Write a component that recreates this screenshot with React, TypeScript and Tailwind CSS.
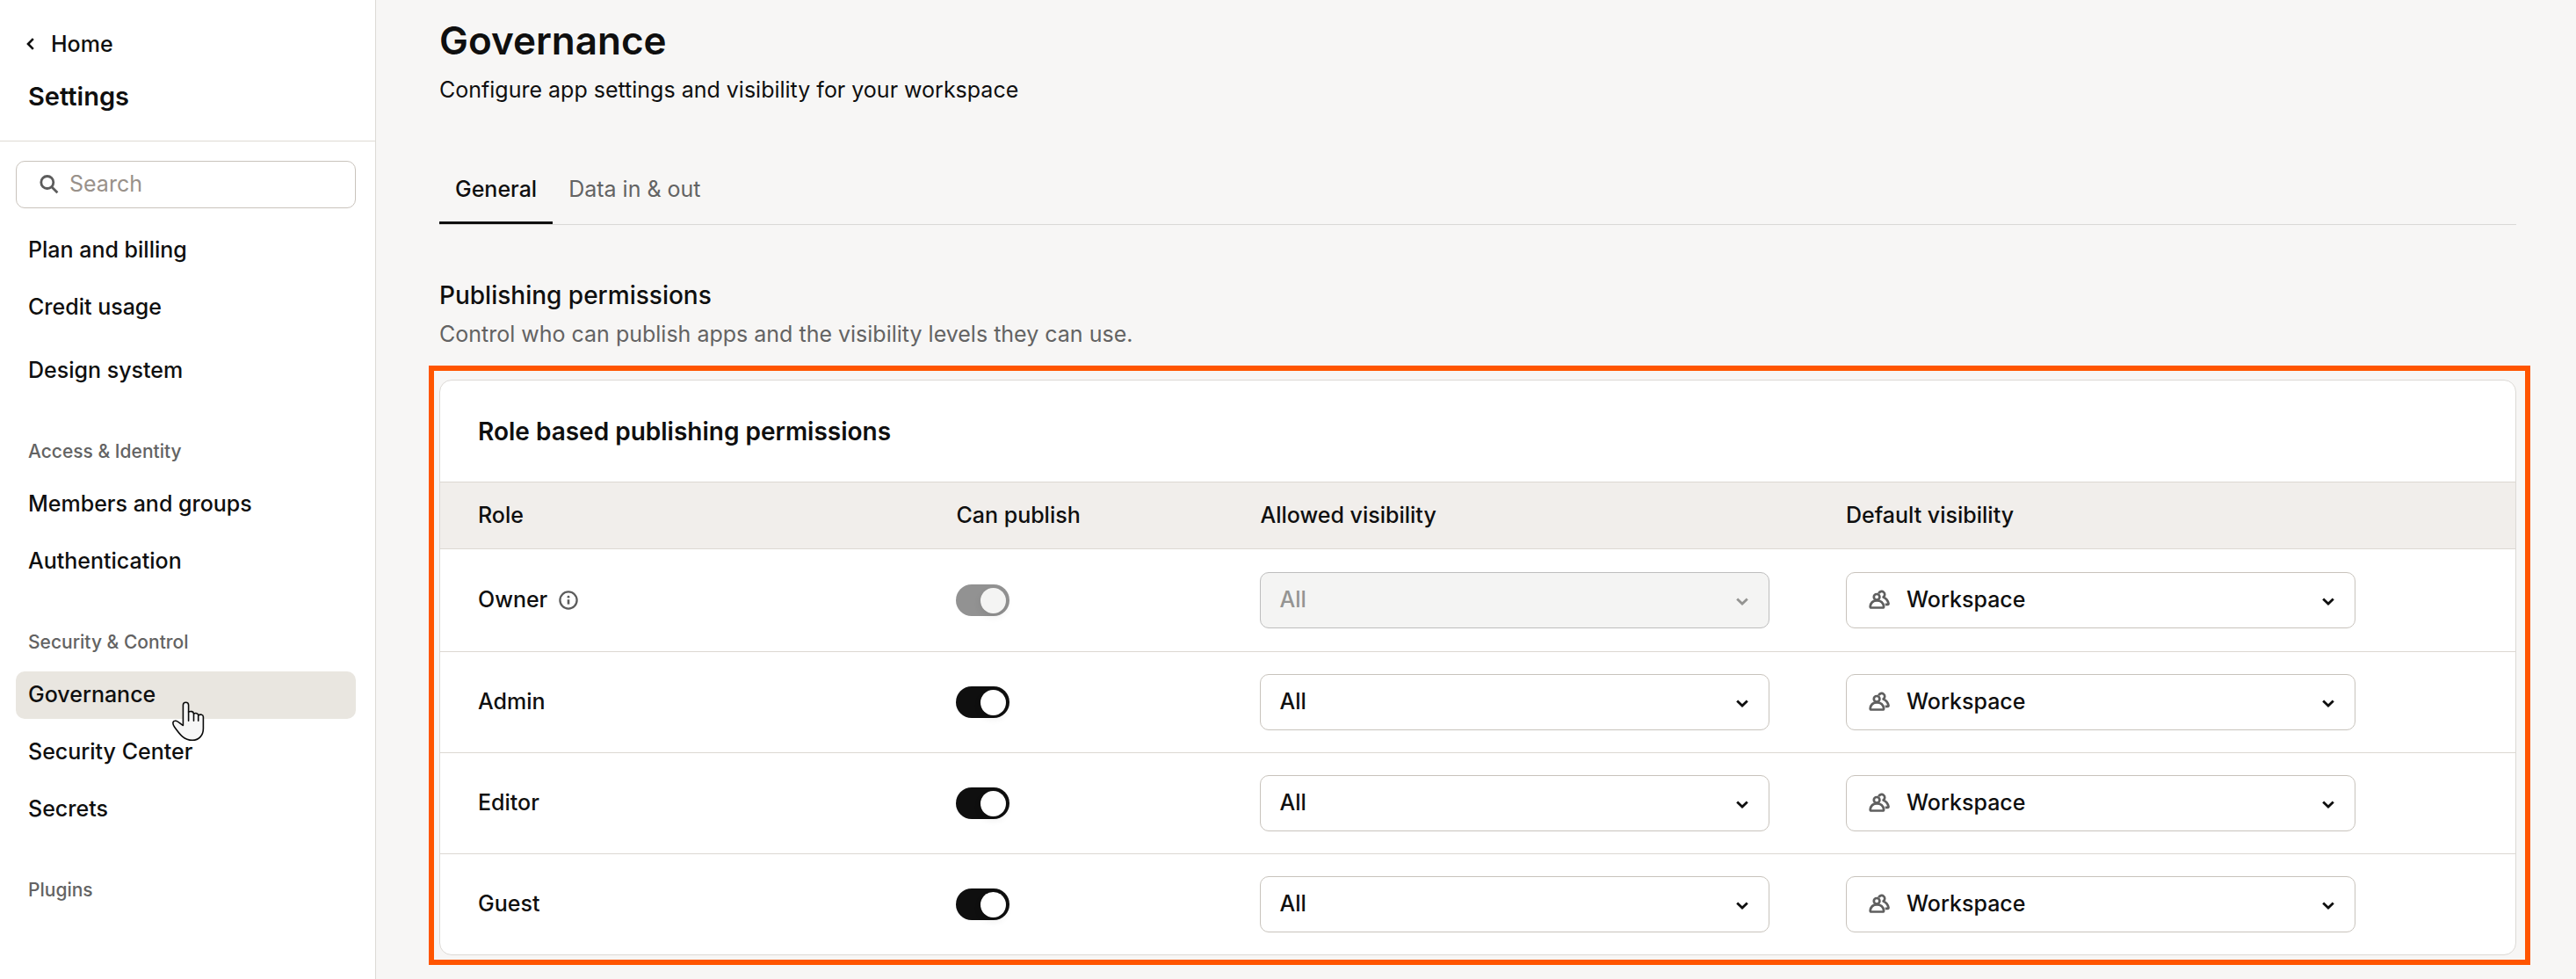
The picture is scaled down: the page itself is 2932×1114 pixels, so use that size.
import { useState } from 'react'

const topLinks = ['Plan and billing', 'Credit usage']

const sections = [
  { title: 'Access & Identity', links: ['Members and groups', 'Authentication'] },
  { title: 'Security & Control', links: ['Governance', 'Security Center', 'Secrets'] },
  { title: 'Plugins', links: [] },
]

const roles = [
  { name: 'Owner', locked: true },
  { name: 'Admin', locked: false },
  { name: 'Editor', locked: false },
  { name: 'Guest', locked: false },
]

function SearchIcon() {
  return (
    <svg viewBox="0 0 22 22" className="w-[22px] h-[22px] shrink-0 text-[#5c5c5c]" fill="none" stroke="currentColor" strokeWidth="2.8">
      <circle cx="8.8" cy="8.5" r="7" />
      <path d="M13.6 13.4L20.4 20.2" />
    </svg>
  )
}

function InfoIcon() {
  return (
    <svg viewBox="0 0 22 22" className="w-[22px] h-[22px] text-[#5c5c5c]" fill="none" stroke="currentColor">
      <circle cx="11" cy="11" r="9.6" strokeWidth="2.3" />
      <path d="M11 10.2v5.4" strokeWidth="2.6" />
      <circle cx="11" cy="7.2" r="1.4" fill="currentColor" stroke="none" />
    </svg>
  )
}

function PeopleIcon() {
  return (
    <svg viewBox="0 0 24 22" className="w-6 h-[22px] text-[#5f5f5f]" fill="none" stroke="currentColor" strokeWidth="2.7" strokeLinejoin="round">
      <path d="M11.4 4.3a3.5 3.5 0 1 1 5.2 4.1c3.2 1.4 5.3 4.3 5.9 7.3.1.7-.3 1.2-1 1.2h-2.8" />
      <circle cx="9.1" cy="8.3" r="3.3" />
      <path d="M1.7 19.2c.5-4.4 3.4-6.9 7.6-6.9s7.4 2.5 7.8 6.9c0 .8-.4 1.3-1.2 1.3H2.8c-.8 0-1.2-.5-1.100-1.300z" />
    </svg>
  )
}

function ChevronDown() {
  return (
    <svg viewBox="0 0 14 9" className="w-[14px] h-[9px]" fill="none" stroke="currentColor" strokeWidth="2.8">
      <path d="M1.2 1.4L7 7l5.8-5.6" />
    </svg>
  )
}

function HandPointer() {
  return (
    <svg
      viewBox="0 0 37 46"
      className="absolute left-[178px] top-[34px] z-10 w-[37px] h-[46px] pointer-events-none"
      fill="#f6f6f6"
      stroke="#0a0a0a"
      strokeWidth="1.6"
      strokeLinejoin="round"
      strokeLinecap="round"
    >
      <path d="M12.4 27.5V4.3c0-4 6.2-4 6.2 0v7.8c2.4-1.3 5.6-.6 5.9 1.9 2.2-1 4.9-.5 5.2 1.7 2.3-1 5.7-.8 5.7 2.1V31c0 8-5.2 13.3-12.4 13.3C13.6 44.3 8.8 38 2.6 29.2 1.3 27.3.8 25.7.9 24.6c.1-1.7 1.5-2.6 3.4-2.3 2.9.5 5.3 3.8 8.1 5.2z" />
      <path d="M18.6 12v10.2M24.5 14v8.2M29.7 15.7v6.5" />
    </svg>
  )
}

function NavLink({ label }: { label: string }) {
  const active = label === 'Governance'
  return (
    <div className="relative">
      <a
        href="#"
        aria-current={active ? 'page' : undefined}
        className={`flex items-center h-[54px] px-[14px] rounded-[10px] text-[25px] font-medium ${active ? 'bg-[#e9e6e0]' : ''}`}
      >
        {label}
      </a>
      {active && <HandPointer />}
    </div>
  )
}

function Sidebar() {
  return (
    <aside className="w-[428px] shrink-0 bg-white border-r border-[#dcdad6]">
      <div className="pt-8 pb-8 border-b border-[#dedad3]">
        <a href="#" className="flex items-center gap-[19px] pl-[30px] leading-9 text-[25px] font-medium">
          <svg viewBox="0 0 9 14" className="w-[9px] h-[14px]" fill="none" stroke="currentColor" strokeWidth="2.6">
            <path d="M7.8 1.2L2 7l5.8 5.8" />
          </svg>
          Home
        </a>
        <h2 className="mt-6 pl-8 leading-9 text-[29px] font-semibold">Settings</h2>
      </div>
      <nav className="pl-[18px] pr-[22px] pt-[22px]">
        <label className="flex items-center gap-3 h-[54px] pl-[26px] border border-[#c9c3bc] rounded-[10px]">
          <SearchIcon />
          <input
            type="text"
            placeholder="Search"
            aria-label="Search"
            className="w-full min-w-0 mr-4 text-[25px] bg-transparent outline-none placeholder:text-[#99918a]"
          />
        </label>
        <div className="flex flex-col gap-[11px] mt-[21px]">
          {topLinks.map((label) => (
            <NavLink key={label} label={label} />
          ))}
        </div>
        <div className="mt-[18px]">
          <NavLink label="Design system" />
        </div>
        {sections.map((section) => (
          <div key={section.title} className="mt-[47px]">
            <h3 className="pl-[14px] leading-9 text-[21px] font-medium text-[#636363]">{section.title}</h3>
            <div className="flex flex-col gap-[11px] mt-[15px]">
              {section.links.map((label) => (
                <NavLink key={label} label={label} />
              ))}
            </div>
          </div>
        ))}
      </nav>
    </aside>
  )
}

function Toggle({ role, locked }: { role: string; locked: boolean }) {
  const [on, setOn] = useState(true)
  return (
    <input
      type="checkbox"
      role="switch"
      aria-label={`${role} can publish`}
      checked={on}
      disabled={locked}
      onChange={() => setOn(!on)}
      className="flex items-center appearance-none w-[61px] h-9 p-1 rounded-full bg-[#929292] checked:justify-end enabled:checked:bg-[#0f0f0f] before:content-[''] before:w-[29px] before:h-[29px] before:rounded-full before:bg-white before:shadow-[0_4px_8px_rgba(0,0,0,0.08)] disabled:before:bg-[#f4f4f3]"
    />
  )
}

function AllowedSelect({ role, locked }: { role: string; locked: boolean }) {
  return (
    <div className={`relative max-w-[580px] ${locked ? 'text-[#949492]' : ''}`}>
      <select
        aria-label={`${role} allowed visibility`}
        disabled={locked}
        className="block appearance-none w-full h-16 pl-[21px] pr-12 rounded-[10px] border border-[#c8c3bc] bg-white text-[25px] font-medium disabled:bg-[#f4f4f3] disabled:border-[#bdbdbd] disabled:opacity-100"
      >
        <option>All</option>
      </select>
      <span className="absolute right-6 top-[29px] pointer-events-none">
        <ChevronDown />
      </span>
    </div>
  )
}

function DefaultSelect({ role }: { role: string }) {
  return (
    <div className="relative max-w-[580px]">
      <span className="absolute left-[26px] top-5 pointer-events-none">
        <PeopleIcon />
      </span>
      <select
        aria-label={`${role} default visibility`}
        className="block appearance-none w-full h-16 pl-[68px] pr-12 rounded-[10px] border border-[#c8c3bc] bg-white text-[25px] font-medium"
      >
        <option>Workspace</option>
      </select>
      <span className="absolute right-6 top-[29px] pointer-events-none">
        <ChevronDown />
      </span>
    </div>
  )
}

function PermissionsTable() {
  return (
    <table className="w-full table-fixed border-separate border-spacing-0 text-left text-[25px]">
      <thead>
        <tr className="h-[76px] bg-[#f1eeeb] *:px-[43px] *:font-medium *:border-b *:border-[#dcd8d2]">
          <th className="w-[23.05%]">Role</th>
          <th className="w-[14.65%]">Can publish</th>
          <th className="w-[28.22%]">Allowed visibility</th>
          <th>Default visibility</th>
        </tr>
      </thead>
      <tbody>
        {roles.map((role) => (
          <tr key={role.name} className="h-[115px] first:h-[116px] *:px-[43px] *:border-[#dcd8d2] not-first:*:border-t">
            <td className="font-medium">
              <span className="flex items-center gap-[13px]">
                {role.name}
                {role.locked && <InfoIcon />}
              </span>
            </td>
            <td>
              <Toggle role={role.name} locked={role.locked} />
            </td>
            <td>
              <AllowedSelect role={role.name} locked={role.locked} />
            </td>
            <td>
              <DefaultSelect role={role.name} />
            </td>
          </tr>
        ))}
      </tbody>
    </table>
  )
}

export default function App() {
  return (
    <div className="flex min-h-screen bg-[#f7f6f5] text-[#0f0f0f] font-['Inter','Liberation_Sans',sans-serif]">
      <Sidebar />
      <main className="grow min-w-0 pl-[72px] pr-[68px] pt-[18px]">
        <h1 className="leading-[56px] text-[44px] font-semibold">Governance</h1>
        <p className="mt-[10px] leading-9 text-[25px]">Configure app settings and visibility for your workspace</p>

        <div role="tablist" className="flex mt-[77px] border-b border-[#dad9d6] text-[25px] leading-9">
          <button role="tab" aria-selected="true" className="px-[18px] pb-[19px] border-b-3 border-[#0f0f0f] font-medium">
            General
          </button>
          <button role="tab" aria-selected="false" className="px-[18px] pb-[19px] border-b-3 border-transparent text-[#636363]">
            Data in &amp; out
          </button>
        </div>

        <h2 className="mt-[62px] leading-9 text-[28px] font-medium">Publishing permissions</h2>
        <p className="mt-2 leading-9 text-[25px] text-[#636363]">
          Control who can publish apps and the visibility levels they can use.
        </p>

        <div className="mt-[18px] -ml-3 -mr-4 pt-[10px] pl-[6px] pr-[10px] pb-[5px] border-6 border-[#ff5500]">
          <section className="overflow-hidden bg-white border border-[#dcd9d5] rounded-[14px]">
            <h3 className="flex items-center h-[116px] px-[43px] text-[28px] font-semibold border-b border-[#dcd8d2]">
              Role based publishing permissions
            </h3>
            <PermissionsTable />
          </section>
        </div>
      </main>
    </div>
  )
}
